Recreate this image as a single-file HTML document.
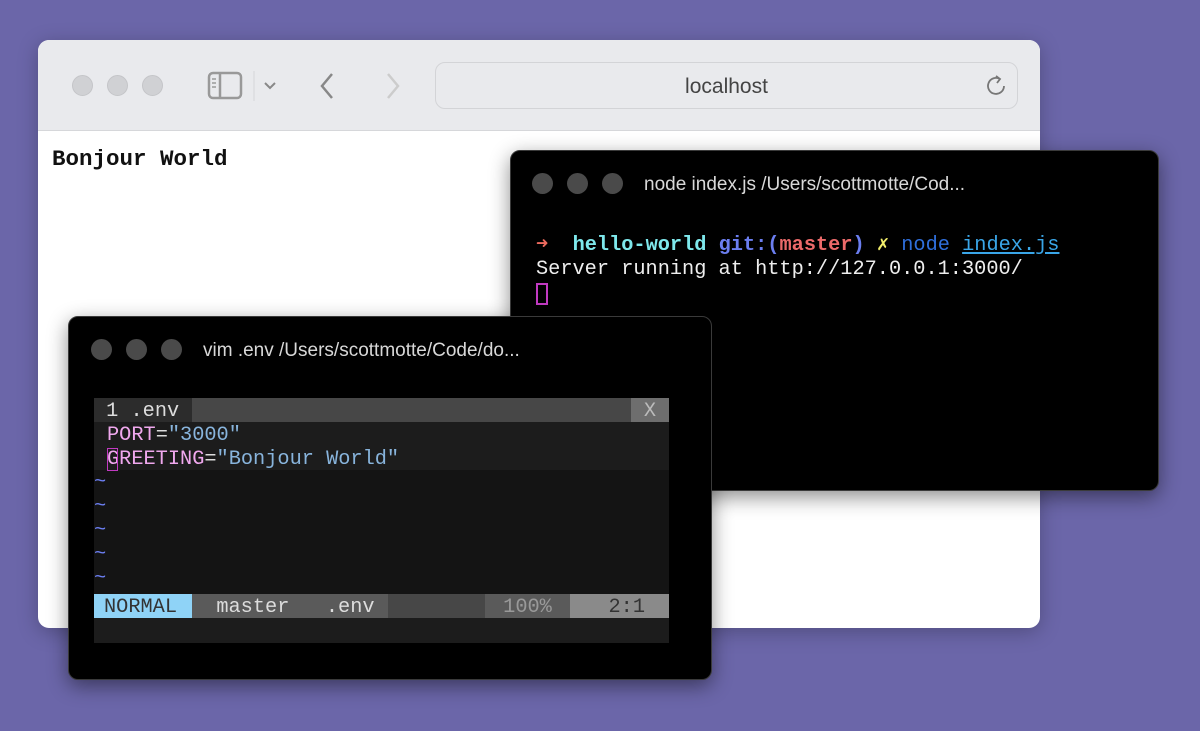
<!DOCTYPE html>
<html><head><style>
*{margin:0;padding:0;box-sizing:border-box}
body{width:1200px;height:731px;background:#6b66a9;position:relative;overflow:hidden;font-family:"Liberation Sans",sans-serif}
.abs{position:absolute}
.browser{left:38px;top:40px;width:1002px;height:588px;background:#fff;border-radius:11px;overflow:hidden;box-shadow:0 4px 20px rgba(0,0,0,.25)}
.tb{left:0;top:0;width:1002px;height:91px;background:#e9eaed;border-bottom:1px solid #d6d7da}
.dot{width:21px;height:21px;border-radius:50%;background:#d0d1d4;border:1px solid #c4c5c8}
.url{left:397px;top:22px;width:583px;height:47px;border:1.5px solid #d3d4d7;border-radius:10px;background:#e9eaed;font-size:21px;color:#444;text-align:center;line-height:48px}
.mono{font-family:"Liberation Mono",monospace}
.term{background:#000;border-radius:10px;box-shadow:0 6px 20px rgba(0,0,0,.45);border:1px solid #3a3a3a;overflow:hidden}
.tdot{width:21px;height:21px;border-radius:50%;background:#4a4a4a}
.title{color:#d8d8d8;font-size:19px}
.line{font-size:20.3px;line-height:24px;white-space:pre;color:#eee}
</style></head><body>
<div class="abs browser">
 <div class="abs tb">
  <div class="abs dot" style="left:34px;top:35px"></div>
  <div class="abs dot" style="left:69px;top:35px"></div>
  <div class="abs dot" style="left:104px;top:35px"></div>
  <svg class="abs" style="left:168px;top:31px" width="80" height="32"><rect x="3" y="2" width="32" height="25" rx="4" fill="none" stroke="#999" stroke-width="2.5"/><line x1="14" y1="2" x2="14" y2="27" stroke="#999" stroke-width="2.5"/><line x1="6" y1="8" x2="10" y2="8" stroke="#999" stroke-width="1.5"/><line x1="6" y1="12" x2="10" y2="12" stroke="#999" stroke-width="1.5"/><line x1="6" y1="16" x2="10" y2="16" stroke="#999" stroke-width="1.5"/><line x1="48" y1="0" x2="48" y2="30" stroke="#d5d6d9" stroke-width="1"/><path d="M59 12 L64 17 L69 12" fill="none" stroke="#888" stroke-width="2"/></svg>
  <svg class="abs" style="left:280px;top:31px" width="90" height="30"><path d="M14 3 L4 15 L14 27" fill="none" stroke="#888" stroke-width="2.5"/><path d="M70 3 L80 15 L70 27" fill="none" stroke="#ccc" stroke-width="2.5"/></svg>
  <div class="abs url">localhost</div>
  <svg class="abs" style="left:946px;top:34px" width="24" height="24"><path d="M16 5 A8 8 0 1 0 20 12" fill="none" stroke="#777" stroke-width="1.8"/><path d="M12 2 L16 5 L13 9" fill="none" stroke="#777" stroke-width="1.8"/></svg>
 </div>
 <div class="abs" style="left:14px;top:106px;font-family:'Liberation Mono',monospace;font-size:22.5px;font-weight:bold;color:#111">Bonjour World</div>
</div>

<div class="abs term" style="left:510px;top:150px;width:649px;height:341px">
 <div class="abs tdot" style="left:21px;top:22px"></div>
 <div class="abs tdot" style="left:56px;top:22px"></div>
 <div class="abs tdot" style="left:91px;top:22px"></div>
 <div class="abs title" style="left:133px;top:23px">node index.js /Users/scottmotte/Cod...</div>
 <div class="abs mono line" style="left:25px;top:83px"><span style="color:#ec6a5e">➜</span>  <b style="color:#7ee8ec">hello-world</b> <b style="color:#6b7ef0">git:(</b><b style="color:#ec6a6a">master</b><b style="color:#6b7ef0">)</b> <span style="color:#f2ee6a">✗</span> <span style="color:#2f6fdc">node</span> <span style="color:#3aa6e8;text-decoration:underline">index.js</span>
Server running at http://127.0.0.1:3000/</div>
 <div class="abs" style="left:25px;top:132px;width:12px;height:22px;border:2px solid #c13ac1"></div>
</div>

<div class="abs term" style="left:68px;top:316px;width:644px;height:364px">
 <div class="abs tdot" style="left:22px;top:22px"></div>
 <div class="abs tdot" style="left:57px;top:22px"></div>
 <div class="abs tdot" style="left:92px;top:22px"></div>
 <div class="abs title" style="left:134px;top:23px">vim .env /Users/scottmotte/Code/do...</div>
 <div class="abs" style="left:25px;top:81px;width:575px;height:245px;background:#141414">
  <div class="abs" style="left:0;top:0;width:575px;height:24px;background:#474747"></div>
  <div class="abs mono line" style="left:0;top:0;width:98px;height:24px;background:#2c2c2c;color:#ddd;padding-top:2px"> 1 .env</div>
  <div class="abs mono line" style="left:537px;top:0;width:38px;height:24px;background:#6e6e6e;color:#bbb;text-align:center;padding-top:2px">X</div>
  <div class="abs" style="left:0;top:24px;width:575px;height:48px;background:#1c1c1c"></div>
  <div class="abs mono line" style="left:13px;top:26px"><span style="color:#f0a8ee">PORT</span><span style="color:#ddd">=</span><span style="color:#88b4dc">"3000"</span>
<span style="color:#f0a8ee">GREETING</span><span style="color:#ddd">=</span><span style="color:#88b4dc">"Bonjour World"</span></div>
  <div class="abs" style="left:13px;top:50px;width:11px;height:23px;border:1.5px solid #c13ac1"></div>
  <div class="abs mono line" style="left:0;top:73px;color:#6b7ef0">~
~
~
~
~</div>
  <div class="abs" style="left:0;top:196px;width:575px;height:24px;background:#474747"></div>
  <div class="abs mono line" style="left:0;top:196px;width:98px;height:24px;background:#8fd3f7;color:#333;padding-left:10px;padding-top:2px">NORMAL</div>
  <div class="abs mono line" style="left:98px;top:196px;width:196px;height:24px;background:#5a5a5a;color:#ddd;padding-top:2px">  master   .env</div>
  <div class="abs mono line" style="left:391px;top:196px;width:85px;height:24px;background:#5a5a5a;color:#999;text-align:center;padding-top:2px">100%</div>
  <div class="abs mono line" style="left:476px;top:196px;width:99px;height:24px;background:#8a8a8a;color:#333;text-align:right;padding-right:24px;padding-top:2px">2:1</div>
  <div class="abs" style="left:0;top:220px;width:575px;height:25px;background:#1c1c1c"></div>
 </div>
</div>
</body></html>
